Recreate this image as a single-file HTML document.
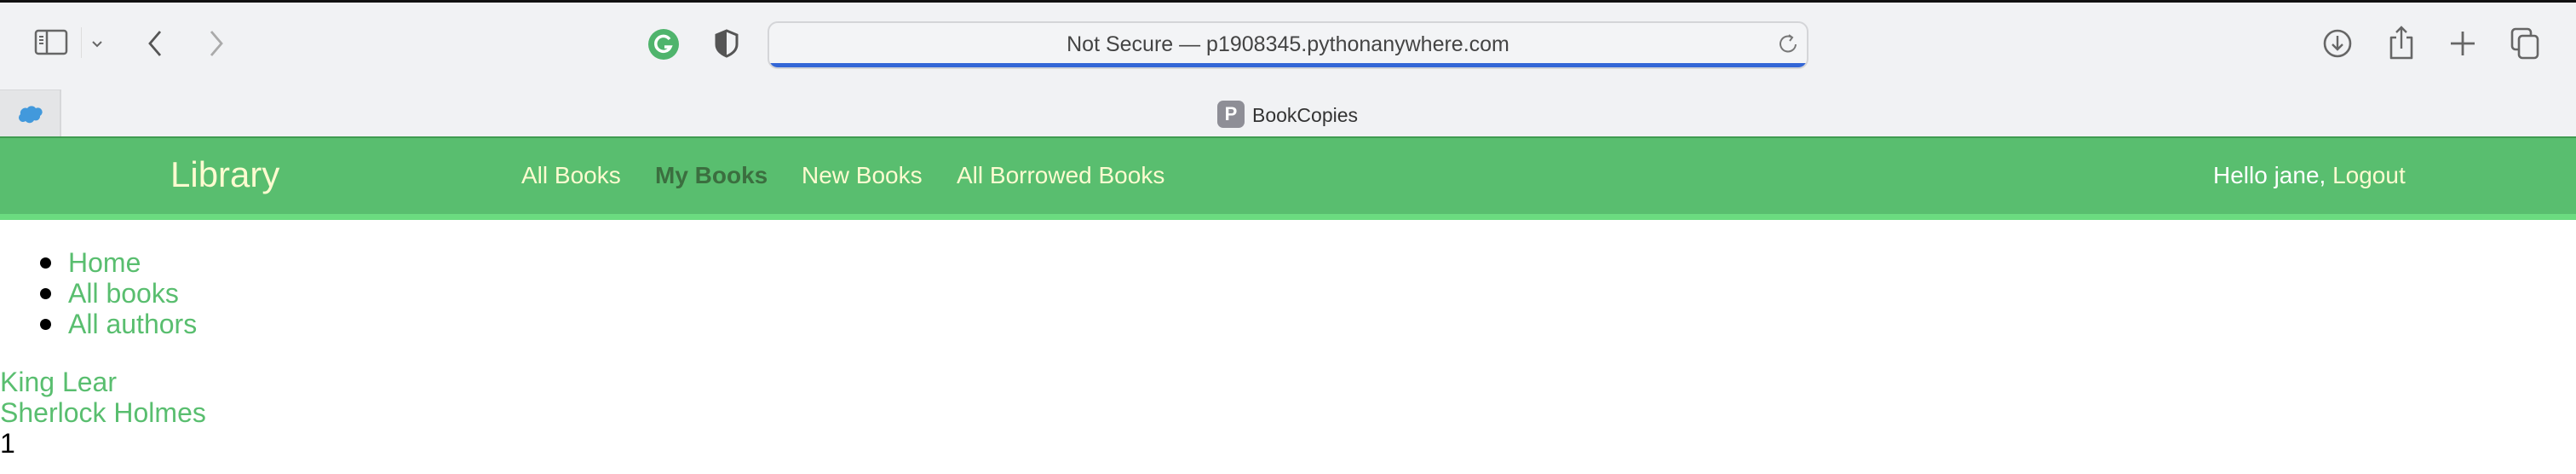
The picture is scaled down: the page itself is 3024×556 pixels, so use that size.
<!DOCTYPE html>
<html><head><meta charset="utf-8"><style>
*{margin:0;padding:0;box-sizing:border-box}
body{width:3024px;height:556px;overflow:hidden;background:#fff;font-family:"Liberation Sans",Arial,sans-serif;position:relative;white-space:nowrap}
.abs{position:absolute}
#top{left:0;top:0;width:3024px;height:160px;background:#f1f2f4;border-top:3px solid #111}
#green{left:0;top:160px;width:3024px;height:91px;background:#59be6f;border-top:2px solid #3f9b50}
#stripe{left:0;top:251px;width:3024px;height:7px;background:#6bdb80}
.nav{color:#fdfbd0;font-size:28px;top:189px;line-height:34px}
.g{color:#59be6f}
.t{font-size:32px;line-height:36px;left:0}
</style></head><body>
<div id="top" class="abs"></div>
<div class="abs" style="left:0;top:105px;width:72px;height:55px;background:#e4e5e7;border-right:2px solid #d6d7d9;border-top:1px solid #d6d7d9"></div>
<svg class="abs" style="left:18px;top:120px" width="36" height="28"><path d="M6 14a6 6 0 0 1 8-7a6 6 0 0 1 10 0a5 5 0 0 1 5 9a5 5 0 0 1-7 5a6 6 0 0 1-10 1a5 5 0 0 1-6-8z" fill="#4299dc"/></svg>
<svg class="abs" style="left:40px;top:34px" width="40" height="32"><rect x="2" y="2" width="36" height="27" rx="3" fill="none" stroke="#666" stroke-width="2.5"/><line x1="15" y1="2" x2="15" y2="29" stroke="#666" stroke-width="2.5"/><path d="M6 9h5M6 13h5M6 17h5" stroke="#666" stroke-width="2"/></svg>
<div class="abs" style="left:95px;top:32px;width:1px;height:36px;background:#ddd"></div>
<svg class="abs" style="left:106px;top:46px" width="16" height="12"><path d="M3 3l5 5l5-5" fill="none" stroke="#666" stroke-width="2"/></svg>
<svg class="abs" style="left:170px;top:34px" width="24" height="34"><path d="M18 3L6 17l12 14" fill="none" stroke="#555" stroke-width="2.8"/></svg>
<svg class="abs" style="left:242px;top:34px" width="24" height="34"><path d="M6 3l12 14L6 31" fill="none" stroke="#aaa" stroke-width="2.8"/></svg>
<svg class="abs" style="left:760px;top:33px" width="38" height="38"><circle cx="19" cy="19" r="18" fill="#4fb46c"/><path d="M26 13a9 9 0 1 0 1 9h-7" fill="none" stroke="#fff" stroke-width="3.5"/></svg>
<svg class="abs" style="left:838px;top:34px" width="30" height="34"><path d="M15 2L3 7v11c0 7 5 11 12 14c7-3 12-7 12-14V7z" fill="none" stroke="#555" stroke-width="3"/><path d="M15 2L3 7v11c0 7 5 11 12 14z" fill="#555"/></svg>
<div class="abs" style="left:901px;top:25px;width:1222px;height:56px;border:2px solid #d4d5d8;border-radius:12px;background:#f3f4f6;overflow:hidden">
<div style="position:absolute;left:0;right:0;bottom:0;height:5px;background:#3366d6"></div>
<div style="text-align:center;font-size:25px;line-height:50px;color:#444">Not Secure — p1908345.pythonanywhere.com</div>
<svg style="position:absolute;right:10px;top:12px" width="22" height="26"><path d="M15 5a9 9 0 1 0 4 8" fill="none" stroke="#777" stroke-width="2"/><path d="M11 2l4 3l-3 4" fill="none" stroke="#777" stroke-width="2"/></svg>
</div>
<svg class="abs" style="left:2726px;top:32px" width="36" height="38"><circle cx="18" cy="19" r="15" fill="none" stroke="#666" stroke-width="2.6"/><path d="M18 10v16M12 20l6 6l6-6" fill="none" stroke="#666" stroke-width="2.4"/></svg>
<svg class="abs" style="left:2802px;top:28px" width="34" height="44"><path d="M11 16H5v24h24V16h-6" fill="none" stroke="#666" stroke-width="2.6" stroke-linejoin="round"/><path d="M17 29V4M11 10l6-6l6 6" fill="none" stroke="#666" stroke-width="2.4"/></svg>
<svg class="abs" style="left:2874px;top:34px" width="34" height="34"><path d="M17 3v28M3 17h28" stroke="#666" stroke-width="2.8"/></svg>
<svg class="abs" style="left:2947px;top:32px" width="36" height="40"><rect x="2" y="2" width="22" height="24" rx="4" fill="none" stroke="#666" stroke-width="2.6"/><rect x="10" y="10" width="22" height="26" rx="4" fill="#f1f2f4" stroke="#666" stroke-width="2.6"/></svg>
<div class="abs" style="left:1429px;top:118px;width:32px;height:32px;border-radius:7px;background:#8e8e96;color:#fff;font-weight:bold;font-size:22px;text-align:center;line-height:32px">P</div>
<div class="abs" style="left:1470px;top:120px;font-size:23px;line-height:30px;color:#333">BookCopies</div>
<div id="green" class="abs"></div>
<div id="stripe" class="abs"></div>
<div class="abs" style="left:200px;top:180px;font-size:42px;line-height:50px;color:#fdfbd0">Library</div>
<div class="abs nav" style="left:612px">All Books</div>
<div class="abs nav" style="left:769px;color:#3b6e3f;font-weight:bold">My Books</div>
<div class="abs nav" style="left:941px">New Books</div>
<div class="abs nav" style="left:1123px">All Borrowed Books</div>
<div class="abs nav" style="left:2598px"><span style="color:#fff">Hello jane, </span>Logout</div>
<div class="abs" style="left:0;top:290px;width:600px;font-size:32px;line-height:36px">
<div style="position:relative;height:36px"><span style="position:absolute;left:47px;top:12px;width:13px;height:13px;border-radius:50%;background:#000"></span><span class="g" style="position:absolute;left:80px">Home</span></div>
<div style="position:relative;height:36px"><span style="position:absolute;left:47px;top:12px;width:13px;height:13px;border-radius:50%;background:#000"></span><span class="g" style="position:absolute;left:80px">All books</span></div>
<div style="position:relative;height:36px"><span style="position:absolute;left:47px;top:12px;width:13px;height:13px;border-radius:50%;background:#000"></span><span class="g" style="position:absolute;left:80px">All authors</span></div>
</div>
<div class="abs t g" style="top:430px">King Lear</div>
<div class="abs t g" style="top:466px">Sherlock Holmes</div>
<div class="abs t" style="top:502px">1</div>
</body></html>
